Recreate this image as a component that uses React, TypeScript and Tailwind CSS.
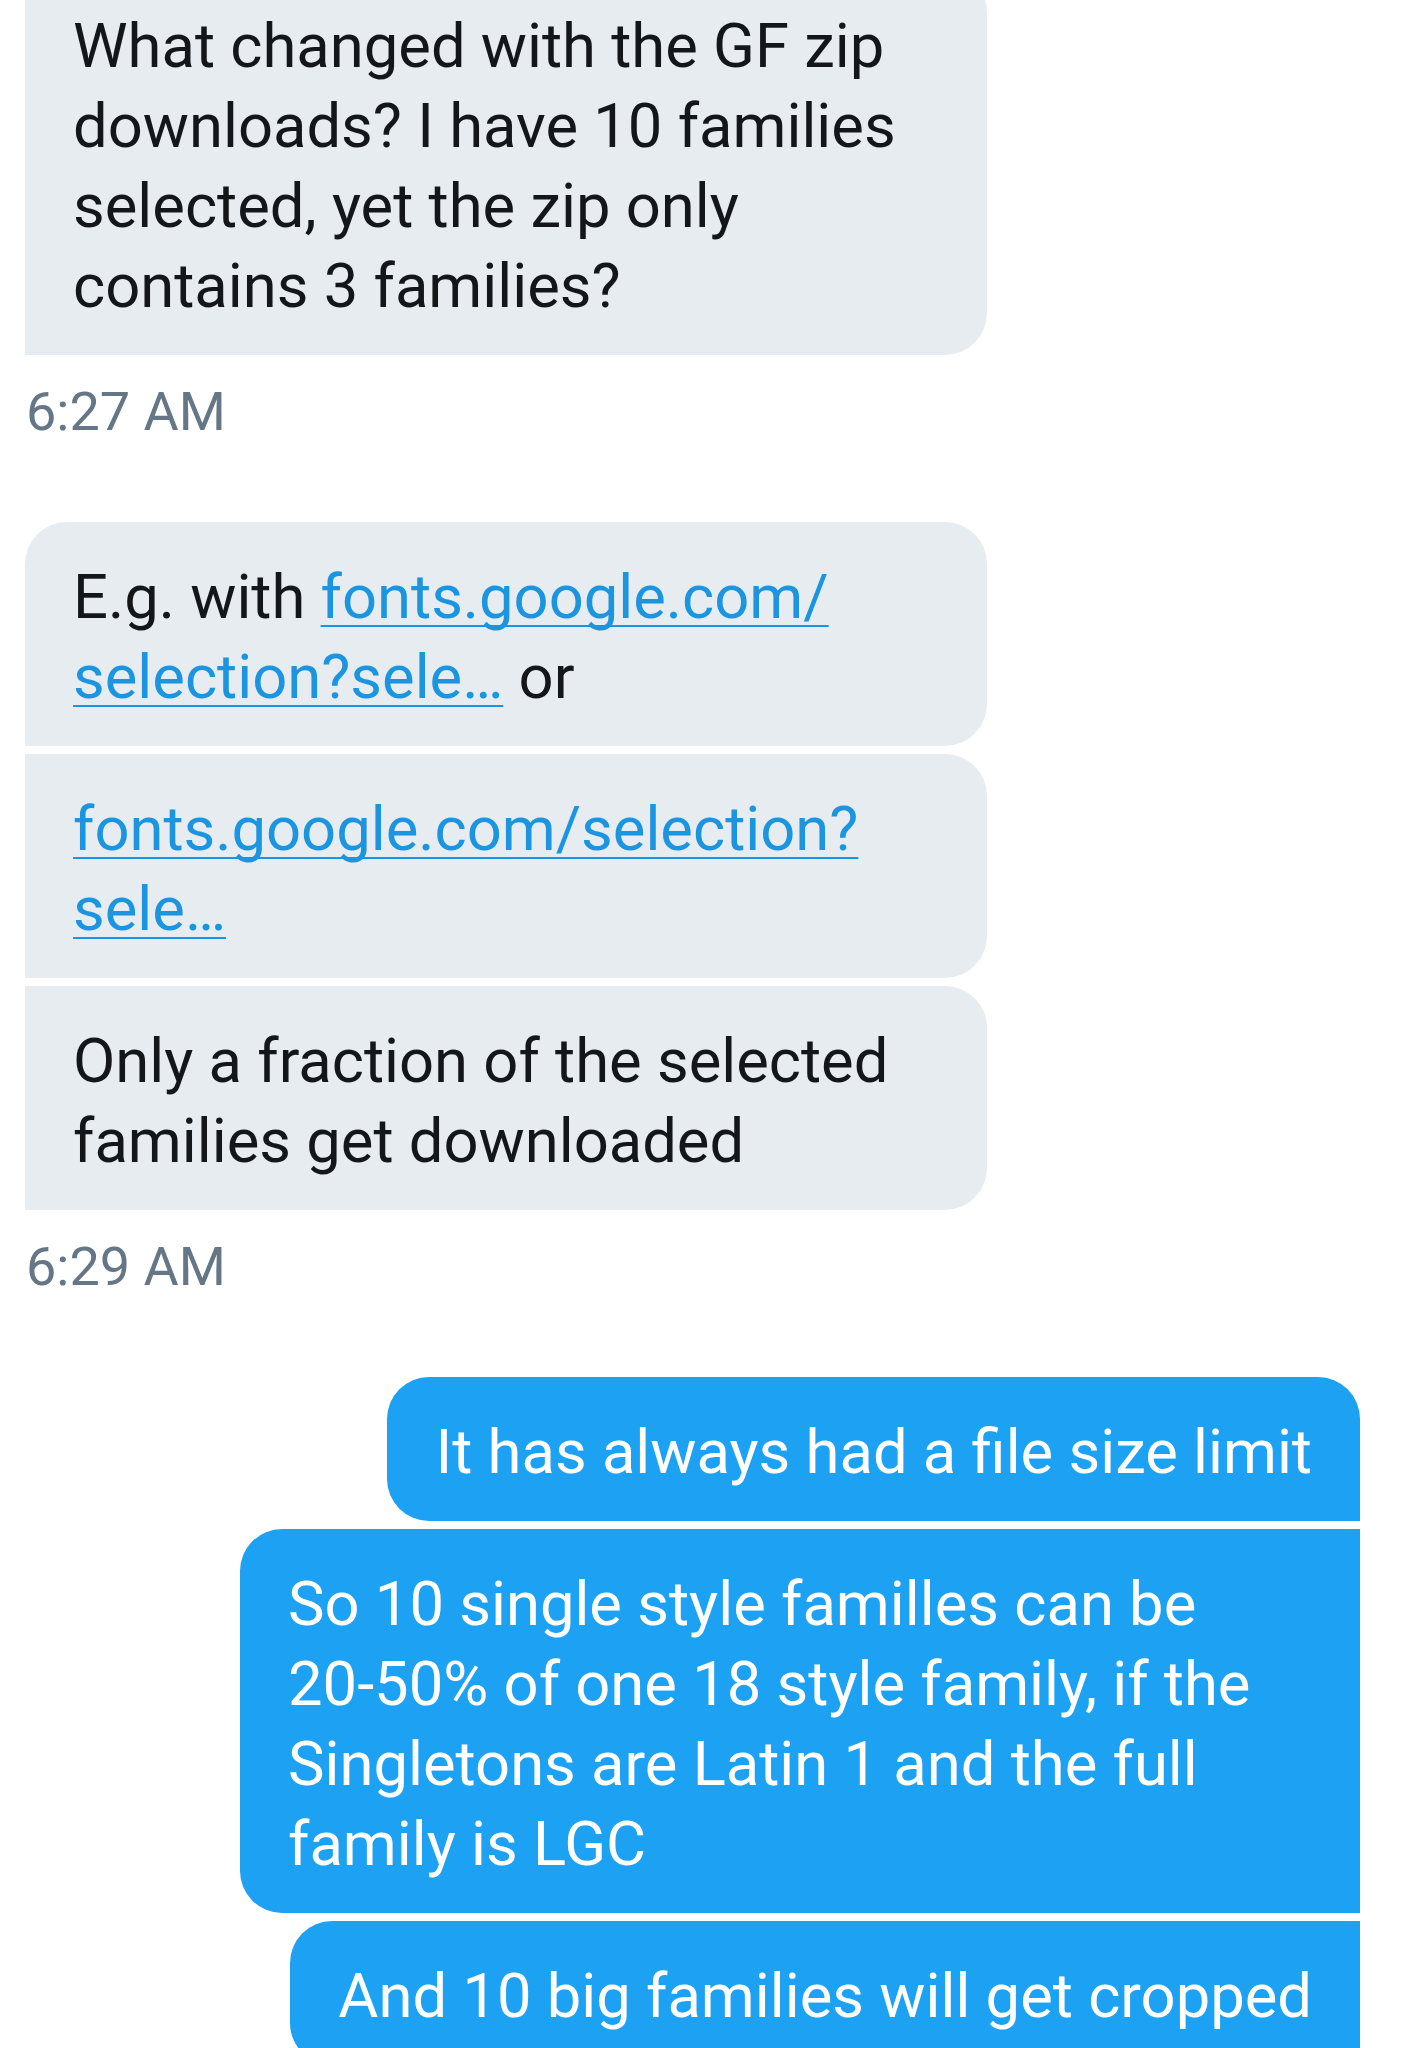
import React from "react";

const linkCls =
  "text-[#1B95E0] underline decoration-2 underline-offset-[7px] [text-decoration-skip-ink:none]";

function Received({
  children,
  first,
  full,
}: {
  children: React.ReactNode;
  first?: boolean;
  full?: boolean;
}) {
  return (
    <div
      className={`max-w-[962px] bg-[#E6ECF0] px-[48px] pt-[35px] pb-[29px] text-[61.5px] leading-[80px] text-[#14171A] rounded-r-[42px] ${
        first ? "rounded-tl-[42px]" : ""
      } ${full ? "w-[962px]" : ""}`}
    >
      {children}
    </div>
  );
}

function Sent({ children, top }: { children: React.ReactNode; top?: boolean }) {
  return (
    <div
      className={`max-w-[1120px] bg-[#1DA1F2] px-[48px] pt-[35px] pb-[29px] text-[61.5px] leading-[80px] text-white rounded-l-[42px] ${
        top ? "rounded-tr-[42px]" : ""
      }`}
    >
      {children}
    </div>
  );
}

function Stamp({ time }: { time: string }) {
  return (
    <div className="mt-[25px] h-[64px] pl-[1px] text-[54px] leading-[64px] text-[#657786]">
      {time}
    </div>
  );
}

export default function App() {
  return (
    <div className="h-[2048px] w-full overflow-hidden bg-white font-['Roboto',sans-serif] antialiased">
      {/* received */}
      <div className="-mt-[29px] flex flex-col items-start pl-[25px]">
        <Received>
          What changed with the GF zip downloads? I have 10 families selected, yet the zip only
          contains 3 families?
        </Received>
        <Stamp time="6:27 AM" />

        <div className="mt-[78px] flex flex-col items-start gap-[8px]">
          <Received first full>
            E.g. with <span className={linkCls}>fonts.google.com/</span>
            <br />
            <span className={linkCls}>selection?sele…</span> or
          </Received>
          <Received full>
            <span className={linkCls}>fonts.google.com/selection?</span>
            <br />
            <span className={linkCls}>sele…</span>
          </Received>
          <Received>Only a fraction of the selected families get downloaded</Received>
        </div>
        <Stamp time="6:29 AM" />
      </div>

      {/* sent */}
      <div className="mt-[78px] flex flex-col items-end gap-[8px] pr-[47px]">
        <Sent top>It has always had a file size limit</Sent>
        <Sent>
          So 10 single style familles can be <span className="whitespace-nowrap">20-50%</span> of
          one 18 style family, if the Singletons are Latin 1 and the full family is LGC
        </Sent>
        <Sent>And 10 big families will get cropped</Sent>
      </div>
    </div>
  );
}
